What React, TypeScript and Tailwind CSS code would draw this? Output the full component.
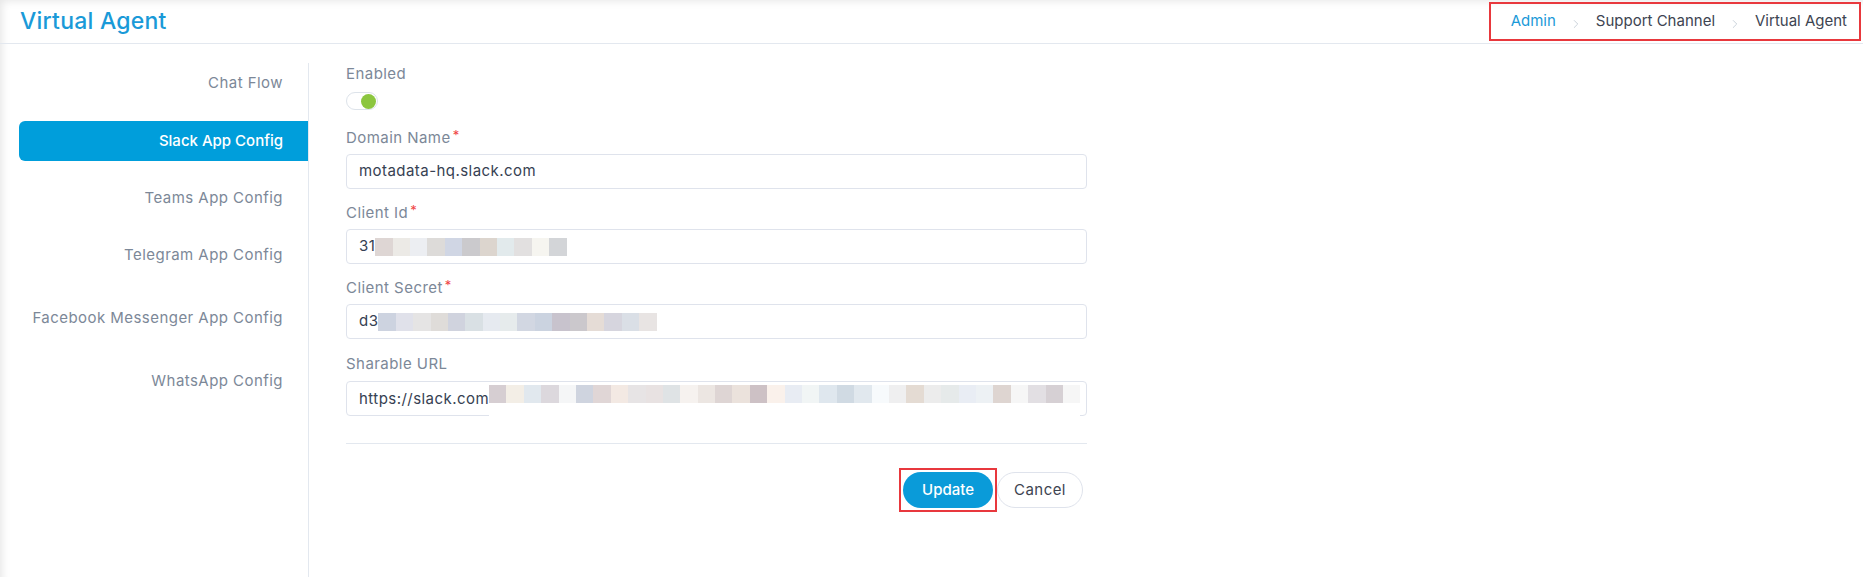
import React, { useState } from 'react';
import { ChevronRight } from 'lucide-react';

const menu = [
  { label: 'Chat Flow', cls: 'mt-0' },
  { label: 'Slack App Config', cls: 'mt-[18px]' },
  { label: 'Teams App Config', cls: 'mt-[17px]' },
  { label: 'Telegram App Config', cls: 'mt-[17px]' },
  { label: 'Facebook Messenger App Config', cls: 'mt-[23px]' },
  { label: 'WhatsApp Config', cls: 'mt-[23px]' },
];

// pixelated (blurred out) secrets
const clientIdBlur = ['#ded6d4', '#eceae6', '#eceef2', '#dddbd9', '#d0d6e4', '#cbcacd', '#dcd5ce', '#e2eaec', '#e2e0e0', '#f6f5f0', '#d3d5d8'];
const secretBlur = ['#cdd3e0', '#e0e1ea', '#e5e4e4', '#dfdcd9', '#d0d3de', '#d9e0e4', '#e6eaf0', '#e6ebec', '#d2d7e2', '#cbd3e0', '#c8c3cd', '#cbc8cc', '#e5dcd6', '#d6d5de', '#dadfe6', '#e8e4e3'];
const urlBlur = ['#d6ced2', '#f3eee6', '#e1e8ee', '#dcd8dd', '#f5f6f7', '#cfd4df', '#e0d6d6', '#f3e9e3', '#e7e4e5', '#e8e2e2', '#dfe3e5', '#f6f2ef', '#ece6e2', '#ded5d4', '#ebe2dc', '#cdc1c5', '#faf1eb', '#e8ecf3', '#f1f5f5', '#dfe7ee', '#d0dae3', '#e1e8ee', '#f7fafc', '#efeff0', '#e4dbd3', '#ececec', '#e6eaea', '#e9edf4', '#edf1f4', '#ded5d1', '#f6f6f6', '#e2dfe3', '#d6d0d4', '#f6f6f6'];

const Blur = ({ colors }: { colors: string[] }) => (
  <div className="flex h-[18px]">
    {colors.map((c, i) => (
      <div key={i} className="h-full w-[17.4px]" style={{ backgroundColor: c }} />
    ))}
  </div>
);

const Label = ({ text, required }: { text: string; required?: boolean }) => (
  <div className="h-[20px] text-[15px] leading-[20px] tracking-[0.03em] text-[#7c8898]">
    {text}
    {required && <span className="ml-[2px] align-top text-[13px] leading-[14px] text-[#ef4444]">*</span>}
  </div>
);

const inputCls =
  'mt-[6px] flex h-[35px] items-center rounded-[4px] border border-[#dfe3ec] px-[12px] text-[15px] tracking-[0.03em] text-[#364152]';

export default function App() {
  const [enabled, setEnabled] = useState(true);

  return (
    <div
      className="h-[577px] w-full overflow-hidden bg-white shadow-[inset_6px_5px_8px_-4px_rgba(0,0,0,0.10)]"
      style={{ fontFamily: 'Inter, "Open Sans", sans-serif' }}
    >
      {/* Header */}
      <div className="flex h-[44px] items-center justify-between border-b border-[#e3e8ef] pl-[20px] pr-[2px]">
        <h1 className="text-[23px] font-medium tracking-[0.01em] text-[#1a9ad8]">Virtual Agent</h1>
        <div className="flex h-[39px] items-center gap-[13px] border-2 border-[#e8383d] pl-[20px] pr-[12px] text-[15px]">
          <span className="text-[#1a9ad8]">Admin</span>
          <ChevronRight className="mt-[4px] h-[14px] w-[14px] text-[#b8c2ce]" strokeWidth={1.25} />
          <span className="text-[#3d4451]">Support Channel</span>
          <ChevronRight className="mt-[4px] h-[14px] w-[14px] text-[#b8c2ce]" strokeWidth={1.25} />
          <span className="text-[#3d4451]">Virtual Agent</span>
        </div>
      </div>

      <div className="flex h-[533px]">
        {/* Sidebar */}
        <div className="mt-[19px] w-[309px] shrink-0 border-r border-[#e3e8ef] pl-[19px]">
          {menu.map((m) => {
            const active = m.label === 'Slack App Config';
            return (
              <div
                key={m.label}
                className={`${m.cls} flex h-[40px] items-center justify-end rounded-l-[6px] pr-[25px] text-[15px] ${
                  active ? 'bg-[#009edb] font-medium text-white' : 'tracking-[0.03em] text-[#7c8898]'
                }`}
              >
                {m.label}
              </div>
            );
          })}
        </div>

        {/* Form */}
        <div className="w-[778px] pl-[37px] pt-[20px]">
          <Label text="Enabled" />
          <button
            onClick={() => setEnabled(!enabled)}
            className="mt-[8px] flex h-[18px] w-[32px] items-center rounded-full border border-[#dde3ea] bg-white px-[1px]"
          >
            <span className={`h-[15px] w-[15px] rounded-full bg-[#8cc63f] ${enabled ? 'ml-auto' : ''}`} />
          </button>

          <div className="mt-[18px]">
            <Label text="Domain Name" required />
            <div className={inputCls}>motadata-hq.slack.com</div>
          </div>

          <div className="mt-[14px]">
            <Label text="Client Id" required />
            <div className={inputCls}>
              <span>31</span>
              <Blur colors={clientIdBlur} />
            </div>
          </div>

          <div className="mt-[14px]">
            <Label text="Client Secret" required />
            <div className={inputCls}>
              <span>d3</span>
              <Blur colors={secretBlur} />
            </div>
          </div>

          <div className="mt-[15px]">
            <Label text="Sharable URL" />
            <div className="mt-[7px] flex h-[35px] items-start rounded-[4px] border border-[#dfe3ec] pl-[12px] pt-[7px] text-[15px] tracking-[0.03em] text-[#364152]">
              <span className="leading-[20px]">https://slack.com</span>
              <div className="relative mt-[-4px]">
                <Blur colors={urlBlur} />
                <div className="absolute left-0 top-[18px] h-[15px] w-full bg-white" />
              </div>
            </div>
          </div>

          <div className="mt-[27px] border-t border-[#e3e8ef]" />

          <div className="mt-[24px] flex justify-end pr-[4px]">
            <div className="border-2 border-[#e8383d] p-[2px]">
              <button className="h-[36px] w-[90px] rounded-full bg-[#0a9bd9] text-[15px] font-medium text-white">
                Update
              </button>
            </div>
            <button className="mt-[4px] h-[36px] w-[86px] rounded-full border border-[#dfe3ec] bg-white text-[15px] tracking-[0.03em] text-[#3d4451]">
              Cancel
            </button>
          </div>
        </div>
      </div>
    </div>
  );
}
